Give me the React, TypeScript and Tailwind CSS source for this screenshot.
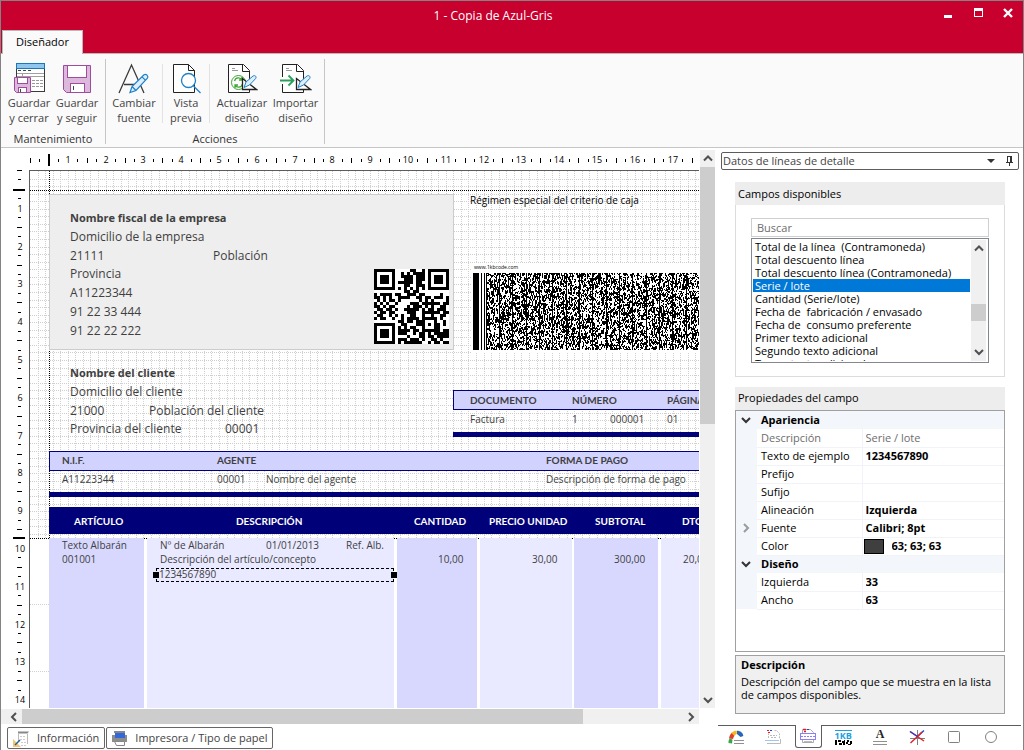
import React, { useLayoutEffect, useRef, useState } from "react";

type Item = { text: string; cls: string };

const DESIGN_ITEMS: Item[] = [
  { text: "Nombre fiscal de la empresa", cls: "left-[40px] top-[39px] text-[11px] font-bold" },
  { text: "Domicilio de la empresa", cls: "left-[40px] top-[58px] text-[12px]" },
  { text: "21111", cls: "left-[40px] top-[77px] text-[12px]" },
  { text: "Población", cls: "left-[183px] top-[77px] text-[12px]" },
  { text: "Provincia", cls: "left-[40px] top-[95px] text-[12px]" },
  { text: "A11223344", cls: "left-[40px] top-[114px] text-[12px]" },
  { text: "91 22 33 444", cls: "left-[40px] top-[133px] text-[12px]" },
  { text: "91 22 22 222", cls: "left-[40px] top-[152px] text-[12px]" },
  { text: "Régimen especial del criterio de caja", cls: "left-[440px] top-[21px] text-[10px] text-black" },
  { text: "Nombre del cliente", cls: "left-[40px] top-[194px] text-[11px] font-bold" },
  { text: "Domicilio del cliente", cls: "left-[40px] top-[213px] text-[12px]" },
  { text: "21000", cls: "left-[40px] top-[232px] text-[12px]" },
  { text: "Población del cliente", cls: "left-[119px] top-[232px] text-[12px]" },
  { text: "Provincia del cliente", cls: "left-[40px] top-[250px] text-[12px]" },
  { text: "00001", cls: "left-[195px] top-[250px] text-[12px]" },
  { text: "DOCUMENTO", cls: "left-[440px] top-[221px] font-['Lato',sans-serif] text-[10px] font-bold" },
  { text: "NÚMERO", cls: "left-[542px] top-[221px] font-['Lato',sans-serif] text-[10px] font-bold" },
  { text: "PÁGINA", cls: "left-[637px] top-[221px] font-['Lato',sans-serif] text-[10px] font-bold" },
  { text: "Factura", cls: "left-[440px] top-[240px] text-[10px]" },
  { text: "1", cls: "left-[542px] top-[240px] text-[10px]" },
  { text: "000001", cls: "left-[580px] top-[240px] text-[10px]" },
  { text: "01", cls: "left-[637px] top-[240px] text-[10px]" },
  { text: "N.I.F.", cls: "left-[32px] top-[281px] font-['Lato',sans-serif] text-[10px] font-bold" },
  { text: "AGENTE", cls: "left-[187px] top-[281px] font-['Lato',sans-serif] text-[10px] font-bold" },
  { text: "FORMA DE PAGO", cls: "left-[516px] top-[281px] font-['Lato',sans-serif] text-[10px] font-bold" },
  { text: "A11223344", cls: "left-[32px] top-[300px] text-[10px]" },
  { text: "00001", cls: "left-[187px] top-[300px] text-[10px]" },
  { text: "Nombre del agente", cls: "left-[236px] top-[300px] text-[10px]" },
  { text: "Descripción de forma de pago", cls: "left-[516px] top-[300px] text-[10px]" },
  { text: "ARTÍCULO", cls: "left-[44px] top-[342px] font-['Lato',sans-serif] text-[10px] font-bold text-white" },
  { text: "DESCRIPCIÓN", cls: "left-[206px] top-[342px] font-['Lato',sans-serif] text-[10px] font-bold text-white" },
  { text: "CANTIDAD", cls: "left-[384px] top-[342px] font-['Lato',sans-serif] text-[10px] font-bold text-white" },
  { text: "PRECIO UNIDAD", cls: "left-[459px] top-[342px] font-['Lato',sans-serif] text-[10px] font-bold text-white" },
  { text: "SUBTOTAL", cls: "left-[565px] top-[342px] font-['Lato',sans-serif] text-[10px] font-bold text-white" },
  { text: "DTO", cls: "left-[652px] top-[342px] font-['Lato',sans-serif] text-[10px] font-bold text-white" },
  { text: "Texto Albarán", cls: "left-[32px] top-[366px] text-[10px]" },
  { text: "Nº de Albarán", cls: "left-[130px] top-[366px] text-[10px]" },
  { text: "01/01/2013", cls: "left-[236px] top-[366px] text-[10px]" },
  { text: "Ref. Alb.", cls: "left-[316px] top-[366px] text-[10px]" },
  { text: "001001", cls: "left-[32px] top-[380px] text-[10px]" },
  { text: "Descripción del artículo/concepto", cls: "left-[130px] top-[380px] text-[10px]" },
  { text: "10,00", cls: "left-[408px] top-[380px] text-[10px]" },
  { text: "30,00", cls: "left-[502px] top-[380px] text-[10px]" },
  { text: "300,00", cls: "left-[584px] top-[380px] text-[10px]" },
  { text: "20,00", cls: "left-[653px] top-[380px] text-[10px]" },
  { text: "1234567890", cls: "left-[129px] top-[395px] text-[10px]" },
];

const SHAPES = [
  "left-[19px] top-[23px] w-[405px] h-[156px] bg-[#eeeeee] border border-[#cccccc]",
  "left-[423px] top-[219px] right-[-2px] h-[20px] bg-[#d2d2ff] border border-[#000078]",
  "left-[423px] top-[261px] right-0 h-[5px] bg-[#000078]",
  "left-[19px] top-[280px] right-[-2px] h-[20px] bg-[#d2d2ff] border border-[#000078]",
  "left-[19px] top-[321px] right-0 h-[5px] bg-[#000078]",
  "left-0 top-[367px] right-0 bottom-0 bg-white",
  "left-0 top-[433px] w-[19px] border-t border-dotted border-[#d0d0d0]",
  "left-0 top-[500px] w-[19px] border-t border-dotted border-[#d0d0d0]",
  "left-0 top-[367px] right-0 border-t border-dotted border-black",
  "left-[19px] top-[336px] right-0 h-[27px] bg-[#000078]",
  "left-[19px] top-[367px] w-[95px] bottom-0 bg-[#d8d8ff]",
  "left-[117px] top-[367px] w-[247px] bottom-0 bg-[#e9e9ff]",
  "left-[367px] top-[367px] w-[80px] bottom-0 bg-[#d8d8ff]",
  "left-[450px] top-[367px] w-[92px] bottom-0 bg-[#e9e9ff]",
  "left-[544px] top-[367px] w-[84px] bottom-0 bg-[#d8d8ff]",
  "left-[631px] top-[367px] right-0 bottom-0 bg-[#e9e9ff]",
  "left-[441px] top-[92px] right-0 h-[90px] bg-white",
];

const FIELDS = [
  "Total de la línea  (Contramoneda)",
  "Total descuento línea",
  "Total descuento línea (Contramoneda)",
  "Serie / lote",
  "Cantidad (Serie/lote)",
  "Fecha de  fabricación / envasado",
  "Fecha de  consumo preferente",
  "Primer texto adicional",
  "Segundo texto adicional",
  "Tercer texto adicional",
];

type Prop = { name: string; value?: string; group?: boolean; readOnly?: boolean; expand?: boolean; swatch?: boolean };
const PROPS: Prop[] = [
  { name: "Apariencia", group: true },
  { name: "Descripción", value: "Serie / lote", readOnly: true },
  { name: "Texto de ejemplo", value: "1234567890" },
  { name: "Prefijo", value: "" },
  { name: "Sufijo", value: "" },
  { name: "Alineación", value: "Izquierda" },
  { name: "Fuente", value: "Calibri; 8pt", expand: true },
  { name: "Color", value: "63; 63; 63", swatch: true },
  { name: "Diseño", group: true },
  { name: "Izquierda", value: "33" },
  { name: "Ancho", value: "63" },
];

const STEP = 9.45;

function useSize() {
  const ref = useRef<SVGSVGElement>(null);
  const [size, setSize] = useState({ width: 0, height: 0 });
  useLayoutEffect(() => {
    const el = ref.current;
    if (!el) return;
    const update = () => {
      const r = el.getBoundingClientRect();
      setSize({ width: r.width, height: r.height });
    };
    update();
    const ro = new ResizeObserver(update);
    ro.observe(el);
    return () => ro.disconnect();
  }, []);
  return { ref, size };
}

function TopRuler() {
  const { ref, size } = useSize();
  const count = Math.max(0, Math.floor((size.width - 36) / STEP) + 1);
  const marks = Array.from({ length: count }, (_, k) => k);
  return (
    <svg ref={ref} className="block h-[22px] w-full" shapeRendering="crispEdges" aria-hidden="true">
      {marks.map((k) => {
        const x = Math.round(30 + k * STEP);
        if (k === 2) return <rect key={k} x={47} y={6} width={2} height={12} />;
        if (k > 0 && k % 4 === 0)
          return (
            <text key={k} x={x - 1} y={15} textAnchor="middle" className="text-[9px]">
              {k / 4}
            </text>
          );
        return k % 2 ? (
          <rect key={k} x={x - 1} y={11} width={1} height={3} />
        ) : (
          <rect key={k} x={x - 1} y={10} width={1} height={5} />
        );
      })}
    </svg>
  );
}

function LeftRuler() {
  const { ref, size } = useSize();
  const count = Math.max(0, Math.floor((size.height - 6) / STEP) + 1);
  const marks = Array.from({ length: count }, (_, k) => k);
  return (
    <svg ref={ref} className="block h-full w-[28px] shrink-0" shapeRendering="crispEdges" aria-hidden="true">
      {marks.map((k) => {
        const y = Math.round(k * STEP);
        if (k === 2 || k === 39) return <rect key={k} x={12} y={k === 2 ? 19 : 367} width={12} height={2} />;
        if (k > 0 && k % 4 === 0)
          return (
            <text key={k} x={19} y={y + 4} textAnchor="middle" className="text-[9px]">
              {k / 4}
            </text>
          );
        return k % 2 ? (
          <rect key={k} x={17} y={y} width={3} height={1} />
        ) : (
          <rect key={k} x={16} y={y} width={5} height={1} />
        );
      })}
    </svg>
  );
}

function Grid() {
  const n = Array.from({ length: 200 }, (_, k) => k + 1);
  return (
    <svg className="absolute inset-0 h-full w-full" shapeRendering="crispEdges" aria-hidden="true">
      <g stroke="#cfcfcf" strokeDasharray="1 1">
        {n.map((k) => {
          const p = Math.round(k * 7.56) + 0.5;
          return (
            <React.Fragment key={k}>
              <line x1={p} y1={0} x2={p} y2={1600} />
              <line x1={0} y1={p} x2={2000} y2={p} />
            </React.Fragment>
          );
        })}
      </g>
      <g stroke="#000" strokeDasharray="1 1">
        <line x1={19.5} y1={0} x2={19.5} y2={367} />
        <line x1={0} y1={19.5} x2={2000} y2={19.5} />
      </g>
    </svg>
  );
}

const QR = [
  "#######.....##..#.#######",
  "#.....#..#.#.####.#.....#",
  "#.###.#..####.###.#.###.#",
  "#.###.#...###.###.#.###.#",
  "#.###.#.#####.##..#.###.#",
  "#.....#...##..###.#.....#",
  "#######.#.#.#.#.#.#######",
  "..........##.##..........",
  "#.####.##..###.##.....#..",
  "##.#.#..####..##.##.###.#",
  ".#.#.##.#......#.#.#....#",
  "#.#.#..#....###.######.##",
  "##.#.##....#.###.#.#..##.",
  ".##.##.#..#####.#.##.###.",
  "#.##.##....###..######.##",
  ".##..#.#.#..##..#..#..##.",
  "#.##..#..#.####.#####.#..",
  "........##.##.###...#..#.",
  "#######..##...###.#.##.#.",
  "#.....#.#.#.##..#...##...",
  "#.###.#.####.##.######.##",
  "#.###.#.###..#.##.#.#####",
  "#.###.#....#...##.##.####",
  "#.....#.###.###.#..##.#..",
  "#######.#.######..#.##.##",
];

function QrCode() {
  const d = QR.flatMap((row, y) => [...row].map((c, x) => (c === "#" ? `M${x} ${y}h1v1h-1z` : ""))).join("");
  return (
    <svg className="absolute left-[344px] top-[98px] h-[75px] w-[75px] bg-white" viewBox="0 0 25 25" shapeRendering="crispEdges" role="img" aria-label="QR">
      <path d={d} />
    </svg>
  );
}

function buildCode() {
  let seed = 7919;
  const rnd = () => {
    seed = (seed * 48271) % 2147483647;
    return seed / 2147483647;
  };
  let d = "M0 0h6v77h-6zM8 0h1v77h-1zM11 0h1v77h-1z";
  for (let x = 13; x < 226; x++) {
    const m = (x - 13) % 40;
    if (m === 0 || m === 13 || m === 26) {
      d += `M${x} 0h1v77h-1z`;
      continue;
    }
    let y = 0;
    while (y < 77) {
      const len = Math.min(77 - y, 1 + Math.floor(rnd() * 2));
      if (rnd() < 0.5) d += `M${x} ${y}h1v${len}h-1z`;
      y += len;
    }
  }
  return d;
}
const CODE_PATH = buildCode();

function OneKbCode() {
  return (
    <svg className="absolute left-[443px] top-[102px] h-[77px] w-[226px]" viewBox="0 0 226 77" shapeRendering="crispEdges" role="img" aria-label="1kbcode">
      <path d={CODE_PATH} />
    </svg>
  );
}

const svgBase = "block h-[32px] w-[32px]";

function SaveCloseIcon() {
  return (
    <svg className={svgBase} viewBox="0 0 32 32" fill="none">
      <rect x="3.5" y="1.500" width="28" height="28" fill="#fff" stroke="#3a3a3a" />
      <rect x="3.5" y="1.500" width="28" height="5" fill="#8ec6ee" stroke="#1b78bd" />
      <path d="M4 11.500h27M4 14.500h27M9.500 12v3" stroke="#a0a0a0" />
      <path d="M5 8.500h3M10 8.500h3M15 8.500h3" stroke="#444" />
      <path d="M19 18.500h11M19 21.500h11M19 24.500h11" stroke="#999" strokeDasharray="3 1" />
      <path d="M1.500 15.500h16v15h-14l-2-2z" fill="#dcb8dc" stroke="#a04aa0" />
      <rect x="4.500" y="15.500" width="10" height="6" fill="#fff" stroke="#a04aa0" />
      <rect x="5.500" y="25.500" width="8" height="5" fill="#fff" stroke="#a04aa0" />
      <path d="M7.500 27v3" stroke="#444" />
    </svg>
  );
}
function SaveIcon() {
  return (
    <svg className={svgBase} viewBox="0 0 32 32" fill="none">
      <path d="M2.500 3.500h27v27h-24l-3-3z" fill="#dcb8dc" stroke="#a04aa0" />
      <rect x="6.500" y="3.500" width="19" height="12" fill="#fff" stroke="#a04aa0" />
      <rect x="9.500" y="21.500" width="14" height="9" fill="#fff" stroke="#a04aa0" />
      <path d="M12.500 24v4" stroke="#444" />
    </svg>
  );
}
function FontIcon() {
  return (
    <svg className={svgBase} viewBox="0 0 32 32" fill="none">
      <path d="M1 31L13.500 3L26 31M6 22.500h16" stroke="#3a3a3a" strokeWidth="1.300" />
      <g transform="translate(11 12)">
        <path d="M1 18.500l2-6L15 .8c2-1.600 5 1.200 3.400 3.400L7 16.500zM3 12.500l4 4M13 2.800l3.400 3.400" fill="#dceefb" stroke="#1f80c8" strokeWidth="1.200" />
      </g>
    </svg>
  );
}
function PreviewIcon() {
  return (
    <svg className={svgBase} viewBox="0 0 32 32" fill="none">
      <path d="M3.500 2.500h15l6 6v22h-21z" fill="#fff" stroke="#222" />
      <path d="M18.500 2.500v6h6" stroke="#222" />
      <circle cx="18.500" cy="18.500" r="7" fill="#fff" stroke="#1f80c8" strokeWidth="1.300" />
      <path d="M23.500 24l7 7" stroke="#1f80c8" strokeWidth="1.300" />
    </svg>
  );
}
function DesignSheet({ children }: { children: React.ReactNode }) {
  return (
    <svg className={svgBase} viewBox="0 0 32 32" fill="none">
      <path d="M2.500 2.500h15l6 6v22h-21z" fill="#fff" stroke="#222" />
      <path d="M16.500 2.500v7h7" stroke="#222" />
      <path d="M6 6.500h3M6 8.500h6" stroke="#999" />
      {children}
      <path d="M16.500 16.500v11h14z" fill="#fff" stroke="#222" strokeWidth="1.300" />
      <path d="M18 25.500l2-5.500 7-6c2-1.200 4 .8 2.600 2.600L23.500 23z" fill="#dceefb" stroke="#1f80c8" />
    </svg>
  );
}
function RefreshIcon() {
  return (
    <DesignSheet>
      <circle cx="12.500" cy="20.500" r="7" fill="#fff" stroke="#3fa535" />
      <path d="M8.500 19c1-4 6-4 7.500-1M16 15v3h-3M16.500 22c-1 4-6 4-7.500 1M9 26v-3h3" stroke="#3fa535" strokeWidth="1.300" />
    </DesignSheet>
  );
}
function ImportIcon() {
  return (
    <DesignSheet>
      <path d="M2.500 15v7" stroke="#fff" strokeWidth="2" />
      <path d="M0 18.500h13M8.500 13.500l5 5-5 5" stroke="#2c9f5e" strokeWidth="1.800" />
    </DesignSheet>
  );
}

function RibbonButton({ icon, a, b, cls }: { icon: React.ReactNode; a: string; b: string; cls: string }) {
  return (
    <button type="button" className={`flex flex-col items-center whitespace-nowrap leading-[15px] text-[#444444] ${cls}`}>
      {icon}
      <span className="mt-px">{a}</span>
      <span>{b}</span>
    </button>
  );
}

function Chevron({ dir, cls }: { dir: "up" | "down" | "left" | "right"; cls?: string }) {
  const d = { up: "M1 6.500l4-4 4 4", down: "M1 3l4 4 4-4", left: "M7 1L3 5l4 4", right: "M3 1l4 4-4 4" }[dir];
  return (
    <svg className={`h-[10px] w-[10px] ${cls ?? ""}`} viewBox="0 0 10 10" fill="none" aria-hidden="true">
      <path d={d} stroke="currentColor" strokeWidth="2" />
    </svg>
  );
}

const toolIcons: { label: string; icon: React.ReactNode }[] = [
  {
    label: "General",
    icon: (
      <svg className="h-[16px] w-[16px]" viewBox="0 0 16 16" fill="none">
        <path d="M.5 14a8 8 0 0 1 1-4.500l3 1L4 14.500z" fill="#35a84a" />
        <path d="M1 9.500C1.300 7 2.300 5 4 3.500l2.500 3L4.800 10z" fill="#e0402a" />
        <path d="M3.500 4C5 2.300 6.800 1.800 8.800 1.800V5L6 6.500z" fill="#f5b81c" />
        <path d="M9 1.800c3.500 0 6 2.200 6.300 5.200l-2.800 1L9 5z" fill="#2566b8" />
        <path d="M6 11.500h10M6 14.500h10" stroke="#909090" />
      </svg>
    ),
  },
  {
    label: "Cabecera",
    icon: (
      <svg className="h-[16px] w-[16px]" viewBox="0 0 16 16" fill="none">
        <path d="M3.500 9V4.500M5 6.500h7M6 8.500h6M9.500 1.500h2l3 3v5" stroke="#bbb" strokeDasharray="2 1" />
        <path d="M2 1.500h2M3 3.500h2" stroke="#e02020" />
        <path d="M5 1.500h2" stroke="#2a3fd0" />
        <path d="M0 11.500h14" stroke="#9cc8f2" />
        <path d="M2 14.500h13.500V10" stroke="#bbb" />
      </svg>
    ),
  },
  {
    label: "Datos de líneas de detalle",
    icon: (
      <svg className="h-[16px] w-[16px]" viewBox="0 0 16 16" fill="none">
        <path d="M2.500 14.500v-13h8l3 3v10z" fill="#fff" stroke="#aaa" />
        <path d="M3 1.500h3M4 3.500h2" stroke="#e02020" strokeWidth="1.300" />
        <path d="M7 1.500h2" stroke="#2a3fd0" />
        <rect x=".5" y="5.500" width="15" height="6" fill="#fff" stroke="#8a82f0" />
        <path d="M1 8.500h14" stroke="#8a82f0" strokeDasharray="2 1" />
        <path d="M4 13.500h8" stroke="#bbb" />
      </svg>
    ),
  },
  {
    label: "1KB",
    icon: (
      <span className="flex w-[17px] flex-col items-center border-t border-[#1b9fe0]">
        <span className="text-[9px] font-bold leading-[9px] text-[#1b9fe0]">1KB</span>
        <svg className="h-[5px] w-[17px]" viewBox="0 0 17 5" shapeRendering="crispEdges">
          <path d="M0 0h2v5H0zM3 0h3v2H3zM4 3h3v2H4zM7 1h2v2H7zM9 0h1v3H9zM8 3h2v2H8zM11 2h2v2h-2zM12 0h2v2h-2zM13 4h3v1h-3zM15 1h2v3h-2z" />
        </svg>
      </span>
    ),
  },
  {
    label: "Texto",
    icon: (
      <span className="flex w-[14px] flex-col items-center gap-[2px]">
        <span className="font-['Liberation_Serif',serif] text-[12px] font-bold leading-[9px] text-[#222222]">A</span>
        <span className="h-[4px] w-[14px] border-y border-[#909090]" />
      </span>
    ),
  },
  {
    label: "Línea",
    icon: (
      <svg className="h-[16px] w-[16px]" viewBox="0 0 16 16" fill="none">
        <path d="M8.500 1v15M1 9.500h15" stroke="#808080" />
        <path d="M1 2.500L15 12" stroke="#e02020" strokeWidth="1.400" />
        <path d="M15 1.500L8.500 7.500" stroke="#2a3fd0" strokeWidth="1.400" />
        <path d="M8.500 7.500L1.500 14" stroke="#e02020" strokeWidth="1.400" />
        <path d="M1 2.500L8.500 7.500" stroke="#2a3fd0" strokeWidth="1.400" />
        <path d="M9 7l4-4" stroke="#e02020" strokeWidth="1.400" />
      </svg>
    ),
  },
  {
    label: "Rectángulo",
    icon: (
      <svg className="h-[16px] w-[16px]" viewBox="0 0 16 16" fill="none">
        <rect x="2.500" y="2.500" width="11" height="11" rx="1" stroke="#808080" />
      </svg>
    ),
  },
  {
    label: "Elipse",
    icon: (
      <svg className="h-[16px] w-[16px]" viewBox="0 0 16 16" fill="none">
        <circle cx="8" cy="8" r="5.500" stroke="#808080" />
      </svg>
    ),
  },
];

export default function App() {
  return (
    <div className="flex h-screen flex-col overflow-hidden border-x border-t border-[#838383] bg-white font-['Open_Sans','Noto_Sans',sans-serif] text-[11px] text-black">
      <header className="flex h-[53px] shrink-0 flex-col justify-between border-b border-[#b9b9b9] bg-[#c8002d]">
        <div className="grid grid-cols-[1fr_auto_1fr] items-start text-white">
          <span />
          <h1 className="pr-[38px] pt-[7px] text-[12px] leading-[16px]">1 - Copia de Azul-Gris</h1>
          <div className="flex justify-end gap-[20px] pr-[10px] pt-[6px]">
            <button type="button" aria-label="Minimizar" className="flex h-[11px] w-[10px] items-end">
              <span className="h-[3px] w-[8px] bg-white" />
            </button>
            <button type="button" aria-label="Maximizar" className="mt-px h-[9px] w-[9px] border border-t-[3px] border-white" />
            <button type="button" aria-label="Cerrar">
              <svg className="h-[10px] w-[10px]" viewBox="0 0 10 10">
                <path d="M1 1l8 8M9 1L1 9" stroke="#fff" strokeWidth="2.400" />
              </svg>
            </button>
          </div>
        </div>
        <nav className="-mb-px flex pl-[1px]">
          <button type="button" className="h-[24px] w-[81px] border border-b-0 border-[#b9b9b9] bg-[#fafafa]">
            Diseñador
          </button>
        </nav>
      </header>

      <div className="flex h-[94px] shrink-0 border-b border-[#c6c6c6] bg-[#fafafa]">
        <section className="flex w-[104px] flex-col pl-[4px] pt-[8px]">
          <div className="flex">
            <RibbonButton icon={<SaveCloseIcon />} a="Guardar" b="y cerrar" cls="w-[48px]" />
            <RibbonButton icon={<SaveIcon />} a="Guardar" b="y seguir" cls="w-[48px]" />
          </div>
          <h2 className="mt-[6px] w-[96px] text-center leading-[16px] text-[#333333]">Mantenimiento</h2>
        </section>
        <div className="mb-[3px] mt-[5px] w-px bg-[#c6c6c6]" />
        <section className="flex w-[218px] flex-col pt-[8px]">
          <div className="flex">
            <RibbonButton icon={<FontIcon />} a="Cambiar" b="fuente" cls="w-[56px]" />
            <div className="my-[2px] w-px bg-[#e2e2e2]" />
            <RibbonButton icon={<PreviewIcon />} a="Vista" b="previa" cls="w-[46px]" />
            <div className="my-[2px] w-px bg-[#e2e2e2]" />
            <RibbonButton icon={<RefreshIcon />} a="Actualizar" b="diseño" cls="ml-[5px] w-[54px]" />
            <RibbonButton icon={<ImportIcon />} a="Importar" b="diseño" cls="w-[53px]" />
          </div>
          <h2 className="mt-[6px] text-center leading-[16px] text-[#333333]">Acciones</h2>
        </section>
        <div className="mb-[3px] mt-[5px] w-px bg-[#c6c6c6]" />
      </div>

      <div className="flex min-h-0 flex-1">
        <main className="flex min-w-0 flex-1 flex-col">
          <div className="flex min-h-0 flex-1">
            <div className="flex min-w-0 flex-1 flex-col">
              <TopRuler />
              <div className="flex min-h-0 flex-1">
                <LeftRuler />
                <div className="relative min-w-0 flex-1 overflow-hidden border-l border-t border-[#5c5c5c] bg-white text-[#3f3f3f]">
                  <Grid />
                  {SHAPES.map((s, i) => (
                    <div key={i} className={`absolute ${s}`} />
                  ))}
                  <QrCode />
                  <OneKbCode />
                  <span className="absolute left-[444px] top-[92px] text-[5px] leading-[8px] text-black">www.1kbcode.com</span>
                  <div className="absolute left-[126px] top-[397px] h-[14px] w-[238px] border border-dashed border-black">
                    <span className="absolute left-[-4px] top-[3px] h-[6px] w-[6px] bg-black" />
                    <span className="absolute right-[-4px] top-[3px] h-[6px] w-[6px] bg-black" />
                  </div>
                  {DESIGN_ITEMS.map((it, i) => (
                    <span key={i} className={`absolute whitespace-nowrap leading-[16px] ${it.cls}`}>
                      {it.text}
                    </span>
                  ))}
                </div>
              </div>
            </div>
            <div className="mt-[2px] flex w-[16px] shrink-0 flex-col border-l border-white bg-[#f0f0f0] text-[#505050]">
              <button type="button" aria-label="Subir" className="flex h-[17px] items-center justify-center">
                <Chevron dir="up" />
              </button>
              <div className="flex-1">
                <div className="h-[49%] bg-[#cdcdcd]" />
              </div>
              <button type="button" aria-label="Bajar" className="flex h-[17px] items-center justify-center">
                <Chevron dir="down" />
              </button>
            </div>
          </div>
          <div className="mr-[16px] flex h-[16px] shrink-0 border-t border-white bg-[#f0f0f0] pl-[4px] text-[#505050]">
            <button type="button" aria-label="Izquierda" className="flex w-[17px] items-center justify-center">
              <Chevron dir="left" />
            </button>
            <div className="flex-1">
              <div className="h-full w-[85%] bg-[#cdcdcd]" />
            </div>
            <button type="button" aria-label="Derecha" className="flex w-[17px] items-center justify-center">
              <Chevron dir="right" />
            </button>
          </div>
          <div className="flex h-[26px] shrink-0 gap-[1px] pl-[6px] pt-[3px] text-[#444444]">
            <button type="button" className="flex h-[22px] items-center gap-[7px] rounded-[2px] border border-[#666666] px-[5px]">
              <svg className="h-[17px] w-[17px]" viewBox="0 0 17 17" fill="none">
                <path d="M5 1.500h11l-1.500 2H5z" fill="#888" />
                <path d="M5.500 3v8M14.500 4v10" stroke="#bbb" />
                <path d="M7 6.500h6M7 9.500h6M8 12.500h5M8 15.500h6" stroke="#ccc" strokeDasharray="2 1" />
                <path d="M0 9v8h8z" fill="#f3c677" />
                <path d="M2 15l5-5" stroke="#1f5f98" strokeWidth="1.500" />
              </svg>
              Información
            </button>
            <button type="button" className="flex h-[22px] items-center gap-[7px] rounded-[2px] border border-[#666666] px-[4px]">
              <svg className="h-[16px] w-[17px]" viewBox="0 0 17 16" fill="none">
                <path d="M3 1h11v2H3z" fill="#888" />
                <path d="M1 5h15v7H1z" fill="#8d8d8d" />
                <path d="M4 3h10v5H4z" fill="#3268d8" />
                <path d="M3.500 11.500h10v4h-8z" fill="#fff" stroke="#888" />
              </svg>
              Impresora / Tipo de papel
            </button>
          </div>
        </main>

        <aside className="flex w-[308px] shrink-0 flex-col pl-[3px] pr-[2px]">
          <div className="ml-[3px] mr-[2px] mt-[4px] flex h-[18px] items-center rounded-[2px] border border-[#5c5c5c] pl-[1px] pr-[4px] text-[#444444]">
            <h2 className="flex-1">Datos de líneas de detalle</h2>
            <button type="button" aria-label="Opciones" className="mr-[10px]">
              <svg className="h-[4px] w-[8px]" viewBox="0 0 8 4">
                <path d="M0 0h8L4 4z" fill="#333" />
              </svg>
            </button>
            <button type="button" aria-label="Fijar">
              <svg className="h-[10px] w-[9px]" viewBox="0 0 9 10" fill="none" shapeRendering="crispEdges">
                <path d="M2.500 6V.500h4V6M5.500 1v5M1 6.500h7M4.500 7v3" stroke="#333" />
              </svg>
            </button>
          </div>

          <section className="mx-[17px] mr-[16px] mt-[12px]">
            <h3 className="h-[23px] bg-[#ededed] pl-[3px] leading-[23px]">Campos disponibles</h3>
            <div className="flex h-[172px] flex-col gap-[1px] border border-t-0 border-[#dcdcdc] px-[15px] pt-[13px]">
              <input
                aria-label="Buscar"
                placeholder="Buscar"
                className="h-[19px] w-full border border-[#cfcfcf] bg-white px-[5px] outline-none placeholder:text-[#6d6d6d]"
              />
              <div className="flex h-[125px] border border-[#828790] p-[1px]">
                <ul role="listbox" aria-label="Campos disponibles" className="min-w-0 flex-1 overflow-hidden">
                  {FIELDS.map((f) => (
                    <li
                      key={f}
                      role="option"
                      aria-selected={f === "Serie / lote"}
                      className={`h-[13px] whitespace-pre pl-[2px] leading-[13px] ${f === "Serie / lote" ? "bg-[#0078d7] text-white" : ""}`}
                    >
                      {f}
                    </li>
                  ))}
                </ul>
                <div className="ml-[1px] mr-px flex w-[15px] shrink-0 flex-col bg-[#f0f0f0] text-[#505050]">
                  <button type="button" aria-label="Subir lista" className="flex h-[18px] items-center justify-center">
                    <Chevron dir="up" />
                  </button>
                  <div className="flex flex-1 flex-col justify-end pb-[22px]">
                    <div className="h-[17px] bg-[#cdcdcd]" />
                  </div>
                  <button type="button" aria-label="Bajar lista" className="flex h-[18px] items-center justify-center">
                    <Chevron dir="down" />
                  </button>
                </div>
              </div>
            </div>
          </section>

          <section className="mx-[17px] mr-[16px] mt-[10px] flex min-h-0 flex-1 flex-col">
            <h3 className="h-[23px] shrink-0 bg-[#ededed] pl-[3px] leading-[22px]">Propiedades del campo</h3>
            <div className="min-h-0 flex-1 overflow-hidden border border-[#a0a0a0]">
              <table className="w-full table-fixed border-collapse">
                <colgroup>
                  <col className="w-[21px]" />
                  <col className="w-[105px]" />
                  <col />
                </colgroup>
                <tbody>
                  {PROPS.map((p) =>
                    p.group ? (
                      <tr key={p.name} className="h-[18px] bg-[#f3f6fb]">
                        <td className="p-0 pr-[2px] text-[#333333]">
                          <Chevron dir="down" cls="mx-auto block" />
                        </td>
                        <th colSpan={2} className="p-0 pl-[4px] text-left leading-[16px]">
                          {p.name}
                        </th>
                      </tr>
                    ) : (
                      <tr key={p.name} className="h-[18px]">
                        <td className="bg-[#f3f6fb] p-0 pr-[2px] text-[#9a9a9a]">{p.expand && <Chevron dir="right" cls="mx-auto block" />}</td>
                        <th
                          className={`border-b border-r border-[#f0f3f8] p-0 pl-[4px] text-left font-normal leading-[16px] ${p.readOnly ? "text-[#6d6d6d]" : ""}`}
                        >
                          <label htmlFor={`p-${p.name}`}>{p.name}</label>
                        </th>
                        <td className="border-b border-[#f0f3f8] p-0">
                          <div className="flex items-center">
                            {p.swatch && <span className="ml-px mr-[5px] h-[15px] w-[20px] shrink-0 border border-black bg-[#3f3f3f]" />}
                            <input
                              id={`p-${p.name}`}
                              defaultValue={p.value}
                              readOnly={p.readOnly}
                              className={`block h-[16px] w-full min-w-0 bg-transparent pl-[3px] outline-none ${p.readOnly ? "text-[#6d6d6d]" : "font-bold"}`}
                            />
                          </div>
                        </td>
                      </tr>
                    )
                  )}
                </tbody>
              </table>
            </div>
            <div className="mt-[3px] h-[59px] shrink-0 border border-[#a0a0a0] bg-[#f0f0f0] px-[5px] pt-[2px] leading-[13px]">
              <h4 className="mb-[4px] font-bold">Descripción</h4>
              <p>Descripción del campo que se muestra en la lista de campos disponibles.</p>
            </div>
          </section>

          <nav className="mt-[11px] flex h-[25px] shrink-0 items-start border-t border-[#5c5c5c] pr-[12px]">
            {toolIcons.map((t, i) => (
              <button
                key={t.label}
                type="button"
                aria-label={t.label}
                className={
                  i === 2
                    ? "-mt-px mx-[3px] flex h-[23px] w-[27px] items-center justify-center rounded-b-[3px] border border-t-0 border-[#5c5c5c] bg-white"
                    : "flex h-[22px] flex-1 items-center justify-center"
                }
              >
                {t.icon}
              </button>
            ))}
          </nav>
        </aside>
      </div>
    </div>
  );
}
